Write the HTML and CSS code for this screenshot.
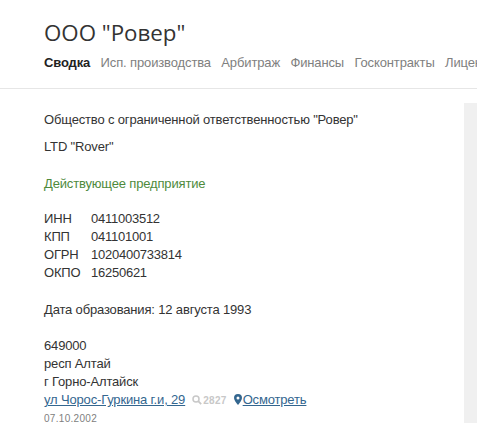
FILE: index.html
```html
<!DOCTYPE html>
<html lang="ru">
<head>
<meta charset="utf-8">
<title>ООО "Ровер"</title>
<link rel="stylesheet" href="styles.css">
</head>
<body>
<header class="top">
  <h1 class="title">ООО "Ровер"</h1>
  <nav class="tabs">
    <a class="tab active">Сводка</a>
    <a class="tab">Исп. производства</a>
    <a class="tab">Арбитраж</a>
    <a class="tab">Финансы</a>
    <a class="tab">Госконтракты</a>
    <a class="tab">Лицензии</a>
  </nav>
</header>
<div class="page">
  <main class="main">
    <p class="name">Общество с ограниченной ответственностью "Ровер"</p>
    <p class="latin">LTD "Rover"</p>
    <p class="status">Действующее предприятие</p>
    <dl class="codes">
      <dt>ИНН</dt><dd>0411003512</dd>
      <dt>КПП</dt><dd>041101001</dd>
      <dt>ОГРН</dt><dd>1020400733814</dd>
      <dt>ОКПО</dt><dd>16250621</dd>
    </dl>
    <p class="founded">Дата образования: 12 августа 1993</p>
    <address class="addr">
      <div>649000</div>
      <div>респ Алтай</div>
      <div>г Горно-Алтайск</div>
      <div class="street">
        <a class="link">ул Чорос-Гуркина г.и, 29</a>
        <span class="count"><svg class="ico-search" viewBox="0 0 10 10" width="10" height="10"><circle cx="4" cy="4" r="3" fill="none" stroke="#c8c8c8" stroke-width="1.5"/><path d="M6.2 6.2 9.2 9.2" stroke="#c8c8c8" stroke-width="1.8"/></svg>2827</span>
        <span class="view"><svg class="ico-pin" viewBox="0 0 8 11" width="8" height="11"><path fill-rule="evenodd" fill="#33668f" d="M4 0a4 4 0 0 1 4 4c0 2.500-2.600 5-4 7C2.600 9 0 6.500 0 4a4 4 0 0 1 4-4zm0 2.500a1.500 1.500 0 1 0 0 3 1.500 1.500 0 0 0 0-3z"/></svg><a class="link view-link">Осмотреть</a></span>
      </div>
      <div class="date">07.10.2002</div>
    </address>
  </main>
  <aside class="side"></aside>
</div>
</body>
</html>
```

FILE: styles.css
```css
html, body {
  margin: 0;
  height: 100%;
  overflow: hidden;
  background: #fff;
}
body {
  font-family: "Liberation Sans", Arial, sans-serif;
  font-size: 13px;
  letter-spacing: -0.16px;
  color: #333;
}
.top {
  height: 88px;
  padding: 0 0 0 44px;
  border-bottom: 1px solid #e6e6e6;
  overflow: hidden;
}
.title {
  margin: 0;
  padding-top: 17px;
  font-family: "Open Sans", sans-serif;
  font-size: 22.300px;
  line-height: 32px;
  font-weight: 400;
  letter-spacing: 0;
  color: #333;
}
.tabs {
  display: flex;
  gap: 10.400px;
  margin-top: 5px;
  white-space: nowrap;
  font-size: 13px;
  line-height: 18px;
  letter-spacing: -0.13px;
  color: #808080;
}
.tab.active {
  font-weight: 700;
  color: #222;
}
.page {
  display: flex;
  padding-top: 14px;
}
.main {
  flex: 1;
  padding: 8px 0 0 44px;
  line-height: 18px;
}
.side {
  width: 13px;
  height: 330px;
  background: #f0f0f0;
}
p { margin: 0; }
.latin { margin-top: 9px; }
.status { margin-top: 19px; color: #4e8a3c; }
.codes {
  display: grid;
  grid-template-columns: 47px auto;
  justify-content: start;
  margin: 17px 0 0;
}
.codes dd { margin: 0; letter-spacing: -0.25px; }
.founded { margin-top: 19px; }
.addr {
  font-style: normal;
  margin-top: 18px;
}
.street {
  display: flex;
  align-items: baseline;
}
.link {
  color: #33668f;
  text-decoration: underline;
}
.count {
  margin-left: 7px;
  font-size: 10px;
  font-weight: 700;
  color: #c8c8c8;
  letter-spacing: .3px;
}
.ico-search { margin-right: 1px; vertical-align: -1px; }
.view { margin-left: 7px; }
.ico-pin { vertical-align: -1px; }
.view-link { margin-left: 1px; }
.date {
  font-size: 10px;
  line-height: 18px;
  color: #808080;
  letter-spacing: .3px;
}
```
